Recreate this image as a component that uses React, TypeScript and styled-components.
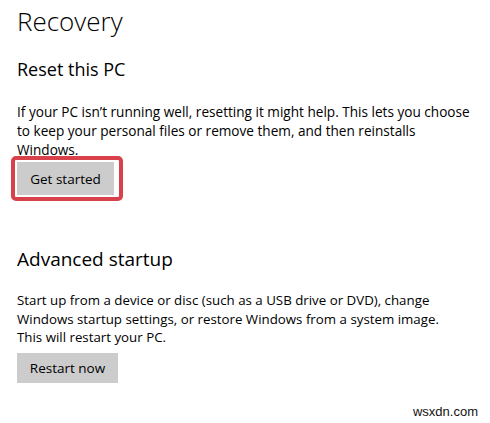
import React from "react";
import styled, { createGlobalStyle } from "styled-components";

const GlobalStyle = createGlobalStyle`
  html, body {
    margin: 0;
    padding: 0;
    background: #ffffff;
  }
  body {
    font-family: "Open Sans", "Noto Sans", "Liberation Sans", sans-serif;
    color: #000000;
    -webkit-font-smoothing: antialiased;
  }
`;

const Page = styled.main`
  position: relative;
  width: 490px;
  height: 423px;
  box-sizing: border-box;
  padding: 5px 0 0 17px;
  display: flex;
  flex-direction: column;
  overflow: hidden;
`;

const Title = styled.h1`
  margin: 0;
  font-size: 26px;
  font-weight: 300;
  line-height: 32px;
`;

const SectionTitle = styled.h2<{ $size: number; $top: number }>`
  margin: ${(p) => p.$top}px 0 0;
  font-size: ${(p) => p.$size}px;
  font-weight: 400;
  line-height: 24px;
`;

const Description = styled.p<{ $size: number; $lineHeight: number; $top: number }>`
  margin: ${(p) => p.$top}px 0 0;
  font-size: ${(p) => p.$size}px;
  line-height: ${(p) => p.$lineHeight}px;
  white-space: nowrap;
`;

const Highlight = styled.div`
  margin: -3px 0 0 -6px;
  align-self: flex-start;
  padding: 2px 5px 2px 2px;
  border: 4px solid #d9414a;
  border-radius: 5px;
  display: flex;
`;

const ActionButton = styled.button<{ $w: number; $h: number }>`
  width: ${(p) => p.$w}px;
  height: ${(p) => p.$h}px;
  border: none;
  border-radius: 0;
  background: #cccccc;
  color: #000000;
  font-family: inherit;
  font-size: 13.5px;
  padding: 0;
  display: flex;
  align-items: center;
  justify-content: center;
`;

const PlainButtonRow = styled.div`
  margin-top: 6px;
  display: flex;
`;

const Watermark = styled.span`
  position: absolute;
  right: 12px;
  bottom: 4px;
  font-family: "Liberation Sans", Arial, sans-serif;
  font-size: 13px;
  color: #111111;
`;

export default function App() {
  return (
    <>
      <GlobalStyle />
      <Page>
        <Title>Recovery</Title>
        <SectionTitle $size={18} $top={20}>Reset this PC</SectionTitle>
        <Description $size={13.6} $lineHeight={19} $top={21}>
          If your PC isn’t running well, resetting it might help. This lets you choose
          <br />
          to keep your personal files or remove them, and then reinstalls
          <br />
          Windows.
        </Description>
        <Highlight>
          <ActionButton $w={97} $h={33}>Get started</ActionButton>
        </Highlight>
        <SectionTitle $size={19} $top={46}>Advanced startup</SectionTitle>
        <Description $size={13.3} $lineHeight={18.5} $top={20}>
          Start up from a device or disc (such as a USB drive or DVD), change
          <br />
          Windows startup settings, or restore Windows from a system image.
          <br />
          This will restart your PC.
        </Description>
        <PlainButtonRow>
          <ActionButton $w={101} $h={30}>Restart now</ActionButton>
        </PlainButtonRow>
        <Watermark>wsxdn.com</Watermark>
      </Page>
    </>
  );
}
